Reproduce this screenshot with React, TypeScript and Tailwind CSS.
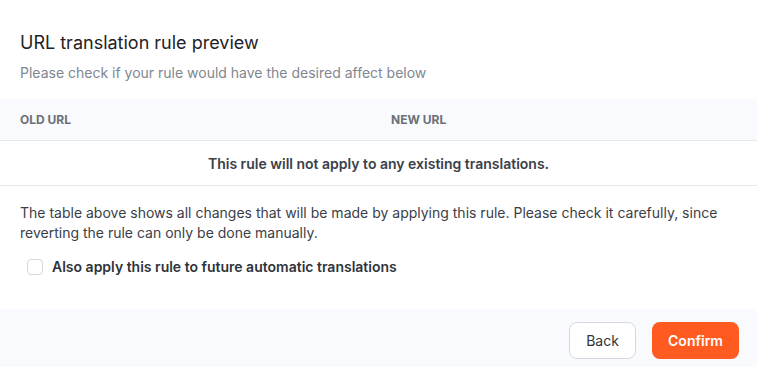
import React, { useState } from 'react';

const App: React.FC = () => {
  const [futuro, setFuturo] = useState(false);

  return (
    <div className="w-[757px] h-[367px] bg-white flex flex-col font-['Inter',sans-serif] text-[#1f2937]">
      {/* Cabeçalho */}
      <div className="px-5 pt-[31px]">
        <h2 className="text-[18px] leading-[24px] text-[#1f2328]">URL translation rule preview</h2>
        <p className="mt-[8px] text-[14px] leading-[20px] text-[#808791]">
          Please check if your rule would have the desired affect below
        </p>
      </div>

      {/* Tabela */}
      <div className="mt-[16px]">
        <div className="h-[42px] bg-[#f9fafd] border-b border-[#e3e7ef] grid grid-cols-[371px_1fr] items-center px-5">
          <span className="text-[12px] font-bold uppercase text-[#6b7079]">Old URL</span>
          <span className="text-[12px] font-bold uppercase text-[#6b7079]">New URL</span>
        </div>
        <div className="h-[45px] border-b border-[#e3e7ef] flex items-center justify-center">
          <span className="text-[14px] font-semibold text-[#3b4048]">This rule will not apply to any existing translations.</span>
        </div>
      </div>

      {/* Aviso */}
      <div className="px-5 pt-[17px]">
        <p className="text-[14px] leading-[20px] text-[#3b4048]">
          The table above shows all changes that will be made by applying this rule. Please check it carefully, since
          reverting the rule can only be done manually.
        </p>
        <label className="mt-[14px] flex items-center gap-[9px] pl-[7px] cursor-pointer">
          <input
            type="checkbox"
            checked={futuro}
            onChange={(e) => setFuturo(e.target.checked)}
            className="appearance-none w-4 h-4 rounded-[4px] border border-[#d3d7de] bg-white"
          />
          <span className="text-[14px] leading-[20px] font-semibold text-[#2f343b]">Also apply this rule to future automatic translations</span>
        </label>
      </div>

      {/* Rodapé */}
      <div className="mt-auto h-[58px] bg-[#f9fafd] flex items-start justify-end gap-4 px-[18px] pt-[13px]">
        <button className="h-[37px] w-[67px] rounded-[8px] border border-[#d5d8dd] bg-white text-[14px] text-[#2f343b]">
          Back
        </button>
        <button className="h-[37px] w-[87px] rounded-[8px] bg-[#ff5a1f] text-[14px] font-semibold text-white">
          Confirm
        </button>
      </div>
    </div>
  );
};

export default App;
